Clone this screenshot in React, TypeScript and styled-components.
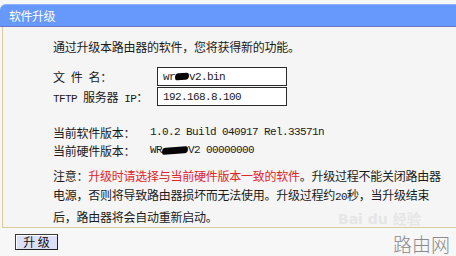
import styled, { createGlobalStyle } from "styled-components";

const GlobalStyle = createGlobalStyle`
  html, body {
    margin: 0;
    padding: 0;
    background: #f7f7f7;
  }
  body {
    font-family: "Noto Sans CJK SC", "DejaVu Sans", sans-serif;
    font-size: 12px;
    color: #1a1a1a;
  }
`;

const Page = styled.div`
  position: relative;
  width: 456px;
  height: 256px;
  overflow: hidden;
  padding-top: 4px;
  box-sizing: border-box;
  background: #f7f7f7;
`;

const TitleBar = styled.div`
  height: 21px;
  line-height: 21px;
  padding-left: 9px;
  background: #6699fb;
  border-top: 1px solid #8fb3fb;
  border-bottom: 1px solid #6f78c8;
  border-top-left-radius: 6px;
  color: #ffffff;
  font-size: 12px;
  letter-spacing: -0.5px;
`;

const Panel = styled.div`
  height: 201px;
  margin-left: 2px;
  padding: 11px 0 0 50px;
  box-sizing: border-box;
  border-left: 1px solid #dccb9a;
  border-bottom: 1px solid #dccb9a;
  background: #f5f5f5;
  letter-spacing: -0.25px;
`;

const Line = styled.div`
  line-height: 18px;
  white-space: nowrap;
`;

const Form = styled.div`
  margin-top: 11px;
  display: flex;
  flex-direction: column;
  gap: 1px;
`;

const FormRow = styled.div`
  display: flex;
  align-items: center;
  height: 19px;
`;

const Label = styled.div<{ $w: number }>`
  width: ${(p) => p.$w}px;
  flex: none;
  white-space: pre;
`;

const Input = styled.div`
  width: 130px;
  height: 19px;
  box-sizing: border-box;
  border: 1px solid #2a2a2a;
  background: #ffffff;
  padding-left: 5px;
  display: flex;
  align-items: center;
`;

const Mono = styled.span`
  font-family: "Liberation Mono", "DejaVu Sans Mono", monospace;
  font-size: 11px;
  letter-spacing: -0.6px;
  white-space: pre;
`;

const Blot = styled.span<{ $w: number }>`
  display: inline-block;
  width: ${(p) => p.$w}px;
  height: 7px;
  background: #050505;
  border-radius: 4px 2px 4px 2px;
  vertical-align: middle;
  transform: rotate(-4deg);
`;

const Versions = styled.div`
  margin-top: 17px;
`;

const InfoRow = styled.div`
  display: flex;
  align-items: center;
  height: 18px;
`;

const Notes = styled.div`
  margin-top: 7px;
  line-height: 19px;
  white-space: nowrap;
`;

const Warn = styled.span`
  color: #e0242a;
`;

const Footer = styled.div`
  padding: 5px 0 0 15px;
`;

const Button = styled.button`
  width: 43px;
  height: 16px;
  padding: 0;
  border: 1px solid #3a3a3a;
  border-right-color: #222;
  border-bottom-color: #222;
  background: #dcdff6;
  color: #111;
  font-family: "Noto Sans CJK SC", sans-serif;
  font-size: 12px;
  line-height: 14px;
  white-space: pre;
  box-shadow: inset 1px 1px 0 #ffffff;
`;

const WaterMark = styled.div`
  position: absolute;
  right: 6px;
  bottom: 1px;
  font-family: "Noto Sans CJK SC", sans-serif;
  font-weight: 300;
  font-size: 19px;
  line-height: 22px;
  color: #8a8a8a;
`;

const BaiduMark = styled.div`
  position: absolute;
  left: 338px;
  top: 211px;
  font-family: "DejaVu Sans", "Noto Sans CJK SC", sans-serif;
  font-weight: bold;
  font-size: 14px;
  line-height: 16px;
  color: #e6e6e6;
`;

export default function App() {
  return (
    <>
      <GlobalStyle />
      <Page>
        <TitleBar>软件升级</TitleBar>
        <Panel>
          <Line>通过升级本路由器的软件，您将获得新的功能。</Line>
          <Form>
            <FormRow>
              <Label $w={104}>
                文<Mono> </Mono>件<Mono> </Mono>名：
              </Label>
              <Input>
                <Mono>
                  wr<Blot $w={14} />
                  v2.bin
                </Mono>
              </Input>
            </FormRow>
            <FormRow>
              <Label $w={104}>
                <Mono>TFTP </Mono>服务器<Mono> IP</Mono>：
              </Label>
              <Input>
                <Mono>192.168.8.100</Mono>
              </Input>
            </FormRow>
          </Form>
          <Versions>
            <InfoRow>
              <Label $w={97}>当前软件版本：</Label>
              <Mono>1.0.2 Build 040917 Rel.33571n</Mono>
            </InfoRow>
            <InfoRow>
              <Label $w={97}>当前硬件版本：</Label>
              <Mono>
                WR<Blot $w={26} />V2 00000000
              </Mono>
            </InfoRow>
          </Versions>
          <Notes>
            注意：<Warn>升级时请选择与当前硬件版本一致的软件</Warn>。升级过程不能关闭路由器
            <br />
            电源，否则将导致路由器损坏而无法使用。升级过程约<Mono>20</Mono>秒，当升级结束
            <br />
            后，路由器将会自动重新启动。
          </Notes>
        </Panel>
        <Footer>
          <Button>升 级</Button>
        </Footer>
        <BaiduMark>Bai du 经验</BaiduMark>
        <WaterMark>路由网</WaterMark>
      </Page>
    </>
  );
}
